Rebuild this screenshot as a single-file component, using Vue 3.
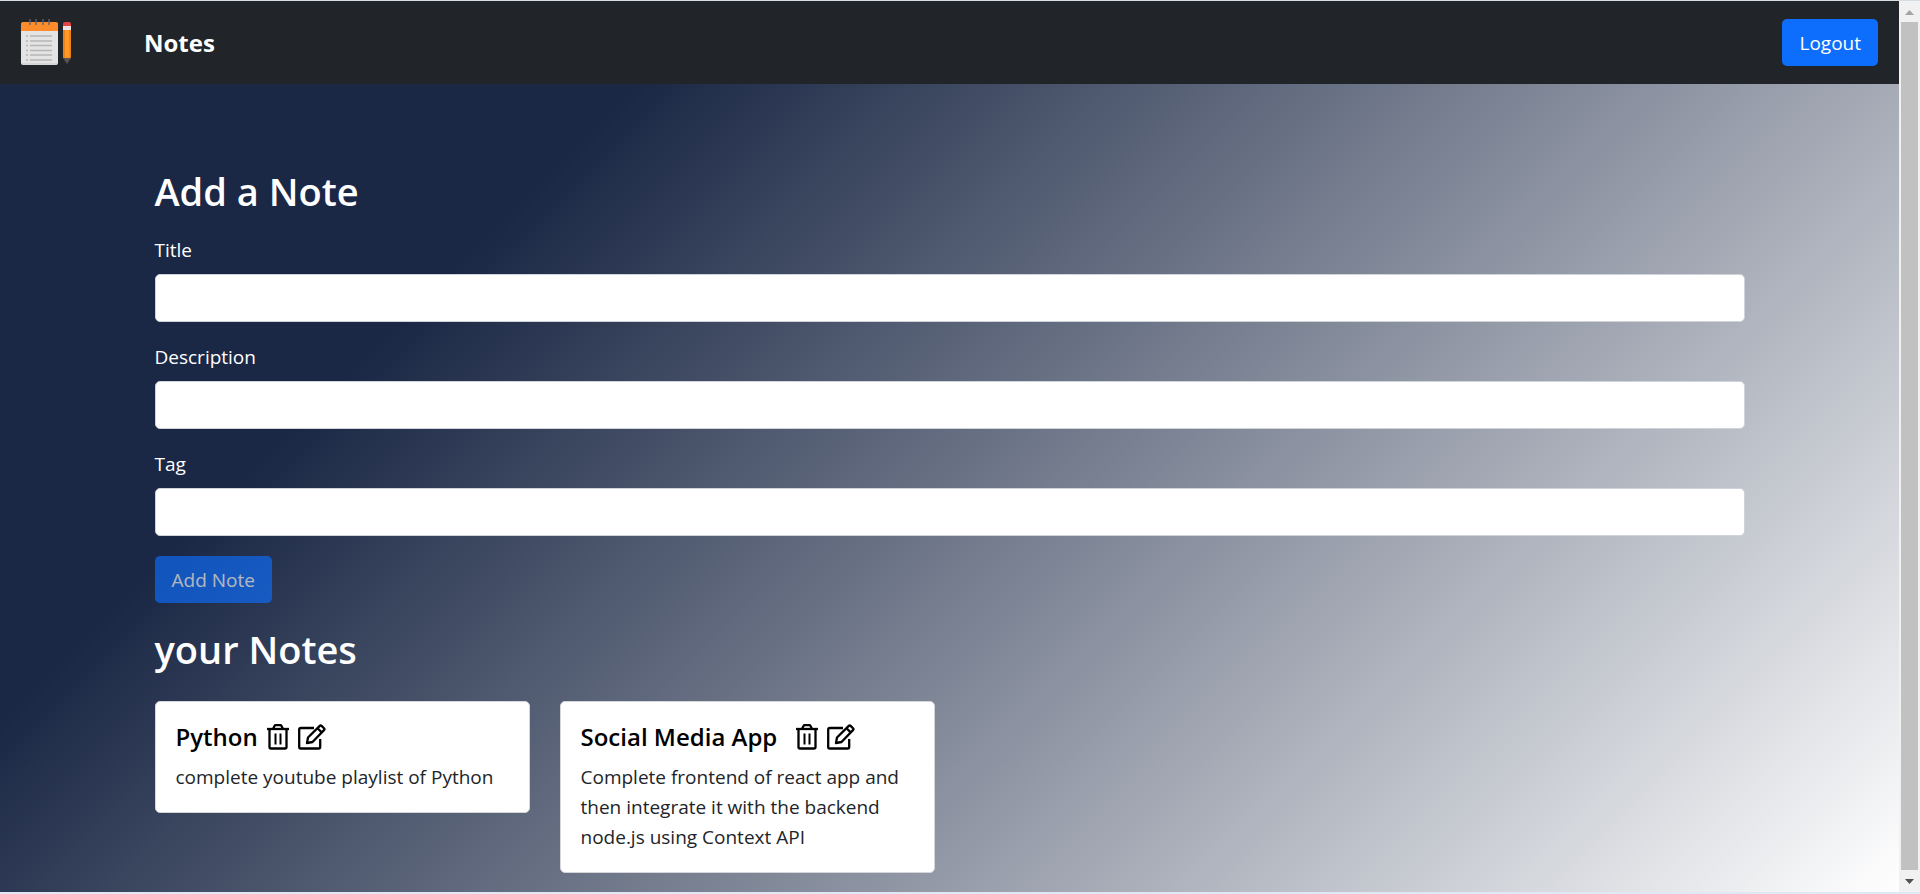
<script setup>
import { ref, computed } from 'vue'

const fields = ref([
  { id: 'title', label: 'Title', value: '' },
  { id: 'description', label: 'Description', value: '' },
  { id: 'tag', label: 'Tag', value: '' },
])

const notes = ref([
  { id: 1, title: 'Python', text: 'complete youtube playlist of Python', wide: false },
  {
    id: 2,
    title: 'Social Media App',
    text: 'Complete frontend of react app and then integrate it with the backend node.js using Context API',
    wide: true,
  },
])

const incomplete = computed(() => fields.value.some((field) => field.value.length === 0))

function addNote() {
  const [title, description] = fields.value
  notes.value.push({ id: Date.now(), title: title.value, text: description.value, wide: false })
  fields.value.forEach((field) => (field.value = ''))
}

function removeNote(id) {
  notes.value = notes.value.filter((note) => note.id !== id)
}
</script>

<template>
  <div class="window">
    <div class="page">
      <nav class="navbar">
        <svg class="logo" viewBox="0 0 51 47" aria-hidden="true">
          <rect x="0" y="4" width="37" height="42" rx="2" fill="#e4e4e4" />
          <path d="M0 12V5a2 2 0 0 1 2-2h33a2 2 0 0 1 2 2v7z" fill="#ff8c2b" />
          <path d="M1 45h35" stroke="#c9c9c9" stroke-width="1" />
          <path d="M9 0v6M15 0v6M22 0v6M28 0v6" stroke="#5b6470" stroke-width="1.4" />
          <path d="M5 17h2M5 22h2M5 26.500h2M5 31.500h2M5 36h2M5 41h2M9 17h22M9 22h22M9 26.500h22M9 31.500h22M9 36h22M9 41h22" stroke="#b4b5b7" stroke-width="1.400" />
          <path d="M42 7V5a2 2 0 0 1 2-2h4a2 2 0 0 1 2 2v2z" fill="#e2453f" />
          <path d="M42 7h8v4h-8z" fill="#e9e4e2" />
          <path d="M42 11h8v27l-1.500 2h-5L42 38z" fill="#ff9a24" />
          <path d="M42 11h2v27l-.5 2L42 38zM48 11h2v27l-1.500 2z" fill="#ef7f1a" />
          <path d="M42 39h8l-4 6z" fill="#5a5152" />
        </svg>
        <a class="brand" href="#">Notes</a>
        <button class="btn" type="button">Logout</button>
      </nav>

      <main class="container">
        <h2>Add a Note</h2>
        <form class="form" @submit.prevent="addNote">
          <div v-for="field in fields" :key="field.id" class="field">
            <label :for="field.id">{{ field.label }}</label>
            <input :id="field.id" v-model="field.value" type="text" />
          </div>
          <button class="btn submit" type="submit" :disabled="incomplete">Add Note</button>
        </form>

        <h2>your Notes</h2>
        <div class="notes">
          <article v-for="note in notes" :key="note.id" class="card">
            <header class="card-head">
              <h5 :class="{ spaced: note.wide }">{{ note.title }}</h5>
              <button class="icon" type="button" aria-label="Delete note" @click="removeNote(note.id)">
                <svg width="22" height="26" viewBox="0 0 22 26" fill="none" stroke="#000" stroke-width="2.300">
                  <path d="M0 5h22" />
                  <path d="M6 5l1.500-3q.4-.8 1.200-.8h4.600q.8 0 1.200.8L16 5" />
                  <path d="M2.500 5v18q0 1.500 1.500 1.500h14q1.500 0 1.500-1.500V5" />
                  <path d="M8.500 9.500v11M13.500 9.500v11" stroke-width="2" />
                </svg>
              </button>
              <button class="icon" type="button" aria-label="Edit note">
                <svg width="28" height="26" viewBox="0 0 28 26" fill="none" stroke="#000" stroke-width="2.300" stroke-linejoin="round">
                  <path d="M16 4H2.700Q1.200 4 1.200 5.500V23q0 1.500 1.500 1.500h18q1.500 0 1.500-1.500v-8" />
                  <path d="M9 19l1-5.500L21.800 1.900q.9-.9 1.800 0l2.400 2.400q.9.9 0 1.800L14.500 18z" />
                  <path d="M19.500 4.200l4.200 4.200" />
                </svg>
              </button>
            </header>
            <p>{{ note.text }}</p>
          </article>
        </div>
      </main>
    </div>

    <div class="scrollbar" aria-hidden="true">
      <svg width="21" height="21" viewBox="0 0 21 21"><path d="M6 14l4.500-5 4.500 5z" fill="#a3a3a3" /></svg>
      <div class="thumb"></div>
      <svg width="21" height="22" viewBox="0 0 21 22"><path d="M6 9h9l-4.500 5z" fill="#505050" /></svg>
    </div>
  </div>
</template>

<style>
body {
  margin: 0;
}
</style>

<style scoped>
* {
  box-sizing: border-box;
}

.window {
  display: flex;
  min-height: 100vh;
  border-top: 1px solid #d5dde2;
  border-bottom: 2px solid #dfe8f4;
  font-family: 'Segoe UI', 'Open Sans', 'Noto Sans', sans-serif;
  font-size: 19px;
  line-height: 30px;
}

.page {
  flex: 1;
  min-width: 0;
  background: linear-gradient(315deg, #ffffff 0%, #1b2845 74%);
}

.navbar {
  display: flex;
  align-items: center;
  height: 83px;
  padding: 0 21px;
  background: #212529;
}

.logo {
  width: 51px;
  height: 47px;
}

.brand {
  margin-left: 72px;
  margin-right: auto;
  color: #fff;
  font-size: 24px;
  font-weight: 700;
  text-decoration: none;
}

.btn {
  height: 47px;
  padding: 0 17px;
  border: 0;
  border-radius: 5px;
  background: #0d6efd;
  color: #fff;
  font: inherit;
}

.btn:disabled {
  opacity: 0.65;
}

.container {
  max-width: 1650px;
  margin: 0 auto;
  padding: 83px 30px 18px;
  color: #fff;
}

h2 {
  margin: 0;
  font-size: 38px;
  font-weight: 600;
  line-height: 48px;
}

.form {
  display: flex;
  flex-direction: column;
  align-items: flex-start;
  gap: 20px;
  padding: 20px 0 22px;
}

.field {
  display: flex;
  flex-direction: column;
  gap: 9px;
  width: 100%;
}

.field input {
  width: 100%;
  height: 48px;
  padding: 0 15px;
  border: 1px solid #ced4da;
  border-radius: 5px;
  background: #fff;
  font: inherit;
}

.notes {
  display: flex;
  flex-wrap: wrap;
  align-items: flex-start;
  gap: 30px;
  padding-top: 28px;
}

.card {
  width: 375px;
  padding: 20px;
  border: 1px solid #d4d6da;
  border-radius: 5px;
  background: #fff;
  color: #212529;
}

.card-head {
  display: flex;
  align-items: center;
  gap: 9px;
  margin-bottom: 10px;
}

h5 {
  margin: 0;
  color: #000;
  font-size: 24px;
  font-weight: 600;
  line-height: 30px;
}

.spaced {
  margin-right: 10px;
}

.icon {
  display: flex;
  padding: 0;
  border: 0;
  background: none;
}

.card p {
  margin: 0;
}

.scrollbar {
  display: flex;
  flex-direction: column;
  width: 21px;
  background: #f1f1f1;
}

.thumb {
  flex: 1;
  margin: 0 2px;
  background: #c1c1c1;
}
</style>
